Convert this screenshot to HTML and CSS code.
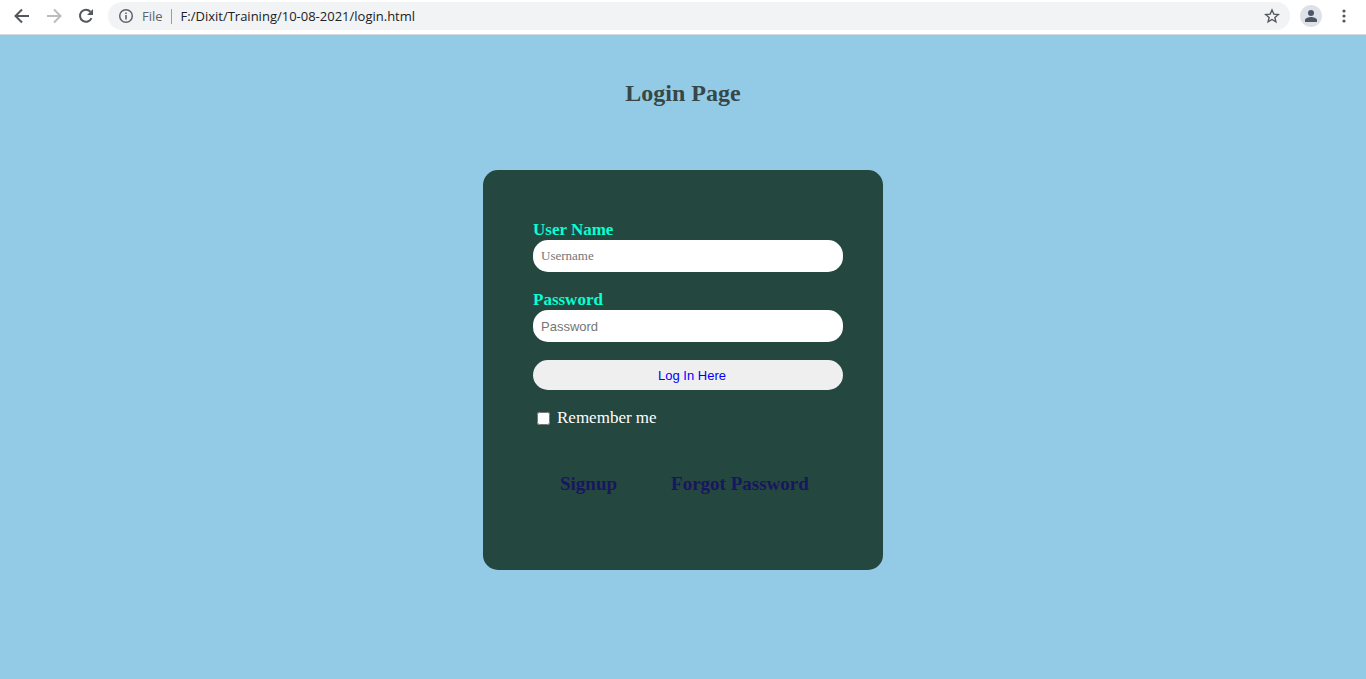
FILE: index.html
```html
<!DOCTYPE html>
<html lang="en">
<head>
<meta charset="utf-8">
<meta name="viewport" content="width=device-width, initial-scale=1">
<title>Login Page</title>
<link rel="stylesheet" href="styles.css">
</head>
<body>
<header class="toolbar">
  <button class="tool" type="button" aria-label="Back">
    <svg viewBox="0 0 16 16"><path d="M15 8H2M8 1.5L1.5 8L8 14.5" fill="none" stroke="#54585d" stroke-width="2"/></svg>
  </button>
  <button class="tool" type="button" aria-label="Forward">
    <svg viewBox="0 0 16 16"><path d="M1 8H14M8 1.5L14.500 8L8 14.5" fill="none" stroke="#babcbe" stroke-width="2"/></svg>
  </button>
  <button class="tool" type="button" aria-label="Reload">
    <svg viewBox="0 0 16 16"><path d="M13.500 10.200A6 6 0 1 1 12.400 3.700" fill="none" stroke="#54585d" stroke-width="2"/><path d="M15 1V7H9Z" fill="#54585d"/></svg>
  </button>
  <div class="address">
    <svg class="info" viewBox="0 0 16 16"><circle cx="8" cy="8" r="6.300" fill="none" stroke="#5f6368" stroke-width="1.500"/><path d="M7.200 7H8.800V11.500H7.200ZM7.200 4.500H8.800V6H7.200Z" fill="#5f6368"/></svg>
    <label class="scheme" for="url">File</label>
    <input class="url" id="url" type="text" value="F:/Dixit/Training/10-08-2021/login.html">
    <button class="star" type="button" aria-label="Bookmark">
      <svg viewBox="0 0 16 16"><path d="M8 2L9.800 6.100L14.300 6.500L10.900 9.400L11.900 13.800L8 11.500L4.100 13.800L5.100 9.400L1.700 6.500L6.200 6.100Z" fill="none" stroke="#54585d" stroke-width="1.400"/></svg>
    </button>
  </div>
  <button class="profile" type="button" aria-label="Profile">
    <svg viewBox="0 0 22 22"><circle cx="11" cy="11" r="11" fill="#dee1e6"/><circle cx="11" cy="8" r="3" fill="#4c566a"/><path d="M5 17V15C5 13 9 12 11 12S17 13 17 15V17Z" fill="#4c566a"/></svg>
  </button>
  <button class="tool" type="button" aria-label="Menu">
    <svg viewBox="0 0 16 16"><g fill="#54585d"><circle cx="8" cy="3" r="1.600"/><circle cx="8" cy="8" r="1.600"/><circle cx="8" cy="13" r="1.600"/></g></svg>
  </button>
</header>
<main class="page">
  <h1 class="title">Login Page</h1>
  <form class="card">
    <label class="label" for="username">User Name</label>
    <input class="field field-serif" id="username" type="text" placeholder="Username">
    <label class="label" for="password">Password</label>
    <input class="field" id="password" type="password" placeholder="Password">
    <button class="submit" type="button">Log In Here</button>
    <div class="remember">
      <input class="check" id="remember" type="checkbox">
      <label for="remember">Remember me</label>
    </div>
    <nav class="links">
      <a href="#signup">Signup</a>
      <a href="#forgot">Forgot Password</a>
    </nav>
  </form>
</main>
</body>
</html>
```
FILE: styles.css
```css
* { box-sizing: border-box; }
body {
  margin: 0;
  min-height: 100vh;
  background: #93cbe6;
  font: 17px/20px "Liberation Serif", serif;
}
svg { display: block; width: 100%; height: 100%; }
button { border: 0; padding: 0; background: none; }
.toolbar {
  display: flex;
  align-items: center;
  gap: 16px;
  padding: 2px 14px 4px;
  background: #fff;
  border-bottom: 1px solid #d5dbdf;
}
.tool { flex: none; width: 16px; height: 16px; }
.toolbar .tool:last-child { margin: 0 0 0 -2px; }
.address {
  flex: 1;
  display: flex;
  align-items: center;
  margin: 0 -6px 0 -2px;
  padding: 0 10px;
  border-radius: 14px;
  background: #f1f3f4;
  font: 13px/28px "Open Sans", sans-serif;
}
.info { flex: none; width: 16px; height: 16px; }
.scheme { padding: 0 8px; color: #5f6368; }
.url {
  flex: 1;
  min-width: 0;
  height: 15px;
  border: 0;
  border-left: 1px solid #9a9da1;
  padding: 0 0 0 9px;
  background: none;
  color: #202124;
  font: 13px/15px "Open Sans", sans-serif;
}
.star { flex: none; width: 16px; height: 16px; }
.profile { flex: none; width: 22px; height: 22px; }
.page { padding: 44px 16px; }
.title {
  margin: 0 0 62px;
  color: #374747;
  font-size: 24px;
  line-height: 29px;
  text-align: center;
}
.card {
  display: flex;
  flex-direction: column;
  max-width: 400px;
  margin: 0 auto;
  padding: 50px 40px 76px 50px;
  border-radius: 15px;
  background: #24473f;
}
.label { color: #08ffd1; font-weight: bold; }
.field {
  width: 100%;
  height: 32px;
  margin: 0 0 18px;
  border: 0;
  border-radius: 15px;
  padding: 0 8px;
  background: #fff;
  font: 13px "Liberation Sans", sans-serif;
}
.field-serif { font-family: "Liberation Serif", serif; }
.field::placeholder { color: #757575; }
.submit {
  height: 30px;
  padding: 0 0 0 8px;
  border-radius: 15px;
  background: #efefef;
  color: #00f;
  font: 13px "Liberation Sans", sans-serif;
}
.remember {
  display: flex;
  align-items: center;
  gap: 7px;
  margin: 18px 0 46px;
  padding: 0 4px;
  color: #fff;
}
.check { width: 13px; height: 13px; margin: 0; }
.links {
  display: flex;
  flex-wrap: wrap;
  gap: 0 54px;
  padding: 0 0 0 27px;
  font-size: 19px;
  font-weight: bold;
}
.links a { color: #191660; text-decoration: none; }
```
